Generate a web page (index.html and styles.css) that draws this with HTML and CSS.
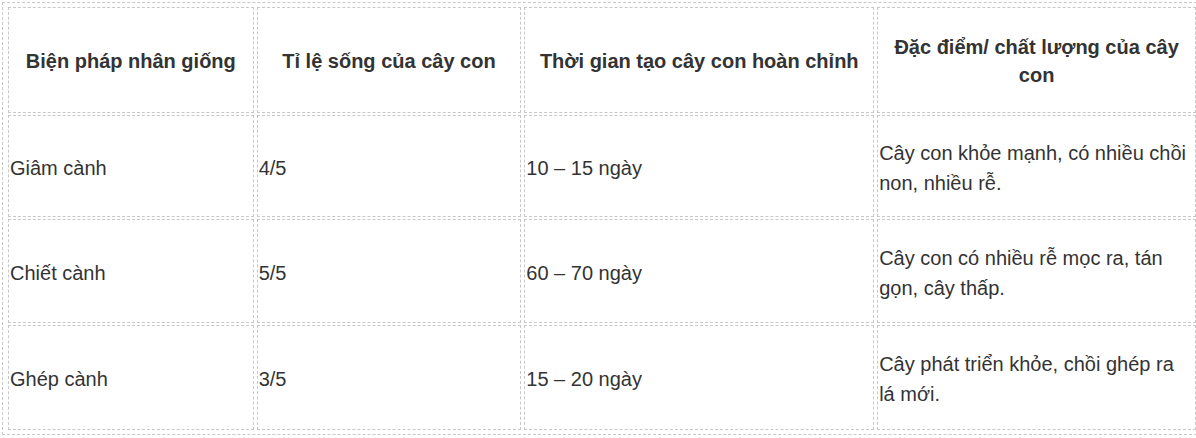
FILE: index.html
```html
<!DOCTYPE html>
<html lang="vi">
<head>
<meta charset="utf-8">
<link rel="stylesheet" href="styles.css">
</head>
<body>
<table class="tbl">
  <colgroup>
    <col class="c1"><col class="c2"><col class="c3"><col class="c4">
  </colgroup>
  <thead>
    <tr class="head">
      <th>Biện pháp nhân giống</th>
      <th>Tỉ lệ sống của cây con</th>
      <th>Thời gian tạo cây con hoàn chỉnh</th>
      <th>Đặc điểm/ chất lượng của cây con</th>
    </tr>
  </thead>
  <tbody>
    <tr class="r1">
      <td>Giâm cành</td>
      <td>4/5</td>
      <td>10 – 15 ngày</td>
      <td>Cây con khỏe mạnh, có nhiều chồi non, nhiều rễ.</td>
    </tr>
    <tr class="r2">
      <td>Chiết cành</td>
      <td>5/5</td>
      <td>60 – 70 ngày</td>
      <td>Cây con có nhiều rễ mọc ra, tán gọn, cây thấp.</td>
    </tr>
    <tr class="r3">
      <td>Ghép cành</td>
      <td>3/5</td>
      <td>15 – 20 ngày</td>
      <td>Cây phát triển khỏe, chồi ghép ra lá mới.</td>
    </tr>
  </tbody>
</table>
</body>
</html>
```

FILE: styles.css
```css
html, body {
  margin: 0;
  padding: 0;
  background: #fff;
}
body {
  padding: 2px 0 0 2px;
  font-family: "Liberation Sans", Arial, sans-serif;
  font-size: 20px;
  color: #333;
}
.tbl {
  width: 1200px;
  border: 1px dashed #c8c8c8;
  border-collapse: separate;
  border-spacing: 3px 2px;
  padding: 2px;
  table-layout: fixed;
}
.c1 { width: 245px; }
.c2 { width: 264px; }
.c3 { width: 349px; }
.c4 { width: 318px; }
.tbl th, .tbl td {
  border: 1px dashed #c8c8c8;
  vertical-align: middle;
}
.tbl th {
  font-weight: bold;
  text-align: center;
  line-height: 28px;
  padding: 2px 8px 0;
  height: 102px;
}
.tbl td {
  text-align: left;
  line-height: 30px;
  padding: 3px 1px 0;
  height: 97px;
}
.r2 td { height: 99px; }
.r3 td { height: 100px; }
```
